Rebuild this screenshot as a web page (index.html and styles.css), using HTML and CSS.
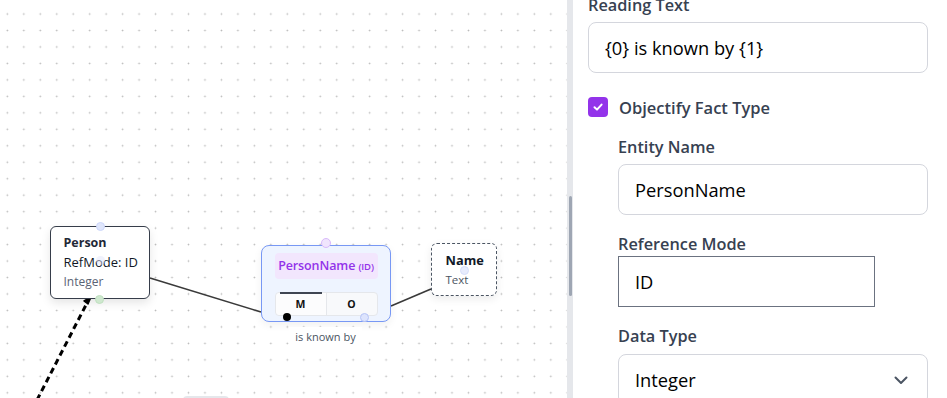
FILE: index.html
```html
<!DOCTYPE html>
<html>
<head>
<meta charset="utf-8">
<link rel="stylesheet" href="styles.css">
</head>
<body>
<div class="app">
  <div class="canvas">
    <svg class="edges" width="567" height="398" viewBox="0 0 567 398">
      <line x1="150" y1="278" x2="261" y2="312" stroke="#3a3a3a" stroke-width="1.6"/>
      <line x1="391" y1="306" x2="431" y2="289" stroke="#3a3a3a" stroke-width="1.6"/>
      <line x1="37" y1="400" x2="87" y2="303" stroke="#000" stroke-width="3" stroke-dasharray="6 4"/>
      <path d="M91 297 L84 301 L88 304 Z" fill="#000" stroke="#000" stroke-width="1.5" stroke-linejoin="round"/>
    </svg>

    <div class="node entity">
      <div class="ent-title">Person</div>
      <div class="ent-ref">RefMode: ID</div>
      <div class="ent-type">Integer</div>
    </div>

    <div class="node fact">
      <div class="fact-name">PersonName <span class="fact-ref">(ID)</span></div>
      <div class="roles">
        <div class="role role-unique">M</div>
        <div class="role">O</div>
      </div>
      <span class="mandatory-dot"></span>
    </div>
    <div class="fact-reading">is known by</div>

    <div class="node value">
      <div class="val-title">Name</div>
      <div class="val-type">Text</div>
    </div>

    <span class="handle h-person-top"></span>
    <span class="handle h-person-mid"></span>
    <span class="handle h-person-bottom"></span>
    <span class="handle h-fact-top"></span>
    <span class="handle h-fact-bottom"></span>
    <span class="handle h-value"></span>
    <div class="peek-node"></div>
  </div>

  <div class="divider"><span class="thumb"></span></div>

  <div class="panel">
    <div class="panel-inner">
      <div class="field">
        <div class="field-label">Reading Text</div>
        <div class="text-input">{0} is known by {1}</div>
      </div>

      <div class="check-row">
        <span class="checkbox">
          <svg width="12" height="12" viewBox="0 0 12 12"><path d="M2.5 6.2 L5 8.6 L9.6 3.6" fill="none" stroke="#fff" stroke-width="2" stroke-linecap="round" stroke-linejoin="round"/></svg>
        </span>
        <span class="check-label">Objectify Fact Type</span>
      </div>

      <div class="nested">
        <div class="field">
          <div class="field-label">Entity Name</div>
          <div class="text-input">PersonName</div>
        </div>
        <div class="field">
          <div class="field-label label-tight">Reference Mode</div>
          <div class="plain-input">ID</div>
        </div>
        <div class="field">
          <div class="field-label label-loose">Data Type</div>
          <div class="text-input select">
            <span>Integer</span>
            <svg width="16" height="16" viewBox="0 0 16 16"><path d="M2.5 5.5 L8 11 L13.5 5.5" fill="none" stroke="#4b5563" stroke-width="2" stroke-linecap="round" stroke-linejoin="round"/></svg>
          </div>
        </div>
      </div>
    </div>
  </div>
</div>
</body>
</html>
```
FILE: styles.css
```css
* { box-sizing: border-box; }
html, body { margin: 0; padding: 0; background: #fff; }
body {
  font-family: "Open Sans", "Noto Sans", sans-serif;
  width: 947px;
  height: 398px;
  overflow: hidden;
}
.app { display: flex; width: 947px; height: 398px; }

/* ---------- canvas ---------- */
.canvas {
  position: relative;
  width: 567px;
  height: 398px;
  flex: none;
  overflow: hidden;
  background-color: #fff;
  background-image: radial-gradient(circle, #b9b9b9 0.7px, rgba(255,255,255,0) 1.1px);
  background-size: 16.47px 16.47px;
  background-position: -0.9px 5.8px;
}
.edges { position: absolute; left: 0; top: 0; }

.node { position: absolute; background: #fff; }

.entity {
  left: 50px; top: 226px; width: 100px; height: 73px;
  border: 1.5px solid #363d4a;
  border-radius: 6px;
  padding: 7px 0 6px 12.5px;
  box-shadow: 0 4px 10px rgba(0,0,0,0.10);
  color: #111827;
}
.ent-title { font-weight: 700; font-size: 12.5px; line-height: 18px; color: #1f2937; }
.ent-ref { font-size: 13px; line-height: 20px; }
.ent-type { font-size: 12px; line-height: 19px; color: #5b6475; }

.fact {
  left: 261px; top: 245px; width: 130px; height: 77px;
  border: 1.5px solid #7898f4;
  border-radius: 8px;
  background: #eef4ff;
  padding: 6.5px 12.5px 4.5px;
  box-shadow: 0 3px 8px rgba(0,0,0,0.06);
}
.fact-name {
  height: 26px;
  background: #f2e6fd;
  border-radius: 4px;
  color: #9333ea;
  font-weight: 600;
  font-size: 12.5px;
  line-height: 26px;
  text-align: center;
  white-space: nowrap;
  letter-spacing: -0.1px;
}
.fact-ref { font-size: 9.5px; font-weight: 600; }
.roles {
  margin-top: 13px;
  height: 24px;
  display: flex;
  border: 1px solid #e5e7eb;
  border-radius: 4px;
  background: #f8f9fb;
}
.role {
  flex: 1;
  position: relative;
  display: flex;
  align-items: center;
  justify-content: center;
  font-size: 10.5px;
  font-weight: 700;
  color: #111;
}
.role + .role { border-left: 1px solid #e5e7eb; }
.role-unique { background: #fcfcfd; border-radius: 4px 0 0 4px; }
.role-unique::before {
  content: "";
  position: absolute;
  left: 4px; right: 4px; top: -1px;
  height: 2.5px;
  background: #3f4552;
}
.mandatory-dot {
  position: absolute;
  left: 20.5px; top: 66.5px;
  width: 8px; height: 8px;
  border-radius: 50%;
  background: #000;
}
.fact-reading {
  position: absolute;
  left: 289px; top: 327px;
  width: 73px; height: 21px;
  background: #fff;
  font-size: 11px;
  line-height: 19px;
  color: #4b5563;
  text-align: center;
}

.value {
  left: 431px; top: 243px; width: 66px; height: 53px;
  border: 1.5px dashed #4b5563;
  border-radius: 6px;
  padding: 6px 0 0 13.5px;
  box-shadow: 0 3px 8px rgba(0,0,0,0.08);
}
.val-title { font-weight: 700; font-size: 12.8px; line-height: 20px; color: #111827; }
.val-type { font-size: 11.5px; line-height: 19px; color: #4b5563; }

.handle {
  position: absolute;
  width: 9px; height: 9px;
  border-radius: 50%;
}
.h-person-top { left: 95.5px; top: 221.5px; background: #dfe6fc; border: 1px solid #cdd7fb; }
.h-person-mid { left: 95.5px; top: 256px; background: rgba(225,230,252,0.5); }
.h-person-bottom { left: 94.5px; top: 294.5px; background: #cfe8cf; border: 1px solid #bfe0bf; }
.h-fact-top { left: 321px; top: 237.5px; width: 10px; height: 10px; background: #f0e5fd; border: 1px solid #d9b9fb; }
.h-fact-bottom { left: 359.5px; top: 312.5px; background: #dde4fd; border: 1px solid #b6c4f6; }
.h-value { left: 459.5px; top: 265.5px; background: #e7ecfd; border: 1px solid #d6defb; }

.peek-node {
  position: absolute;
  left: 183px; top: 396px;
  width: 46px; height: 8px;
  border-radius: 4px;
  background: #e5e7eb;
}

/* ---------- divider ---------- */
.divider {
  width: 6px;
  height: 398px;
  flex: none;
  background: #e5e7eb;
  padding-top: 196px;
  padding-left: 2px;
}
.thumb {
  display: block;
  width: 3px;
  height: 100px;
  border-radius: 2px;
  background: #9ea6b3;
}

/* ---------- panel ---------- */
.panel {
  width: 374px;
  height: 398px;
  flex: none;
  overflow: hidden;
  padding: 0 19px 0 15px;
  color: #374151;
}
.panel-inner {
  margin-top: -6px;
  display: flex;
  flex-direction: column;
}
.field { display: flex; flex-direction: column; }
.field-label {
  font-size: 16.3px;
  font-weight: 600;
  line-height: 22px;
  color: #374151;
  margin-bottom: 6px;
}
.label-tight { margin-bottom: 1px; }
.label-loose { margin-bottom: 7px; }
.text-input {
  height: 51px;
  border: 1px solid #d4d6dd;
  border-radius: 8px;
  padding: 0 16px;
  display: flex;
  align-items: center;
  font-size: 18.3px;
  color: #000;
  background: #fff;
}
.plain-input {
  width: 257px;
  height: 51px;
  border: 1px solid #6b7280;
  padding: 0 16px;
  display: flex;
  align-items: center;
  font-size: 18.3px;
  color: #000;
}
.select { justify-content: space-between; padding-right: 18px; }

.check-row {
  margin-top: 22px;
  height: 24px;
  display: flex;
  align-items: center;
  gap: 11px;
}
.checkbox {
  width: 20px; height: 20px;
  border-radius: 4px;
  background: #9333ea;
  display: flex;
  align-items: center;
  justify-content: center;
}
.check-label { font-size: 16.5px; font-weight: 600; color: #374151; }

.nested {
  padding-left: 30px;
  margin-top: 17px;
  display: flex;
  flex-direction: column;
  gap: 18px;
}
```
